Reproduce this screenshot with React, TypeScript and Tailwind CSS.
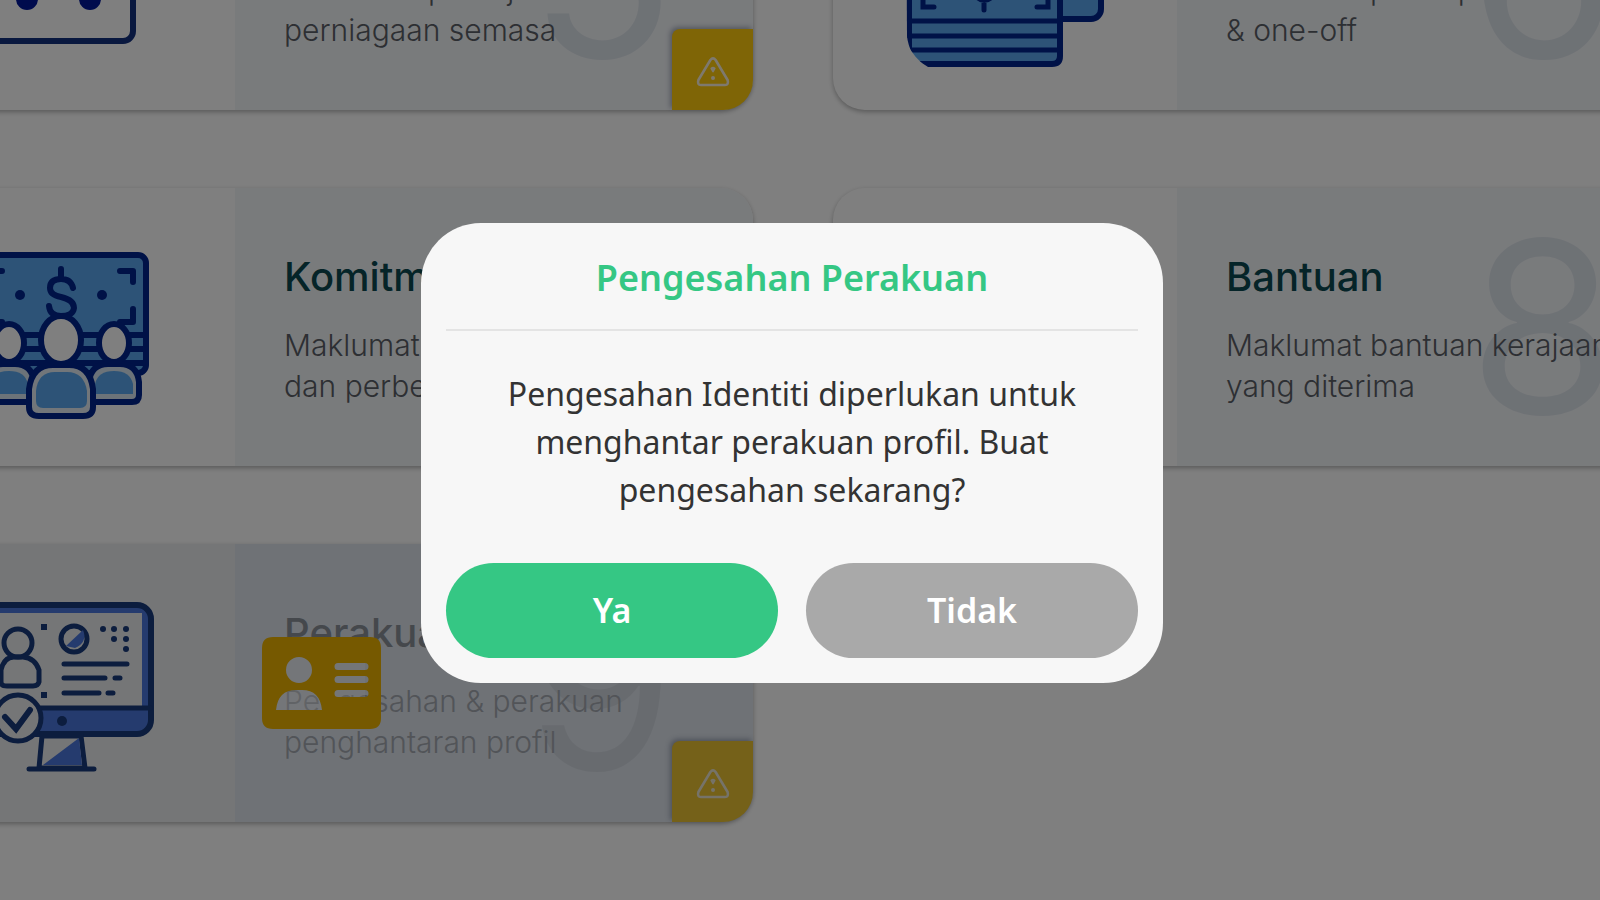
import React, { useState } from 'react';

interface ProfileCardProps {
  title: string;
  text: string;
  number: string;
  icon?: React.ReactNode;
  warning?: boolean;
  disabled?: boolean;
}

function WarningBadge({ faded }: { faded?: boolean }) {
  return (
    <span
      className={`absolute right-0 bottom-0 flex h-[81px] w-[81px] items-center justify-center rounded-tl-lg rounded-br-[30px] pt-1 shadow-[-2px_-2px_5px_rgba(80,90,120,0.45)] ${
        faded ? 'bg-[#eac232]' : 'bg-[#fecb0c]'
      }`}
    >
      <svg viewBox="0 0 34 30" className="h-[30px] w-[34px]" fill="none" stroke={faded ? '#ece6d2' : '#fdf3dc'} strokeWidth="2.6" strokeLinejoin="round">
        <path d="M14.4 3Q17 -.2 19.6 3L31.6 23Q33 28 29 28H5Q1 28 2.4 23Z" />
        <path d="M15.4 11.4Q17 10 18.6 11.4L17 14.4Z" strokeWidth="2" />
        <circle cx="17" cy="21" r="1" strokeWidth="2" />
      </svg>
    </span>
  );
}

function ProfileCard({ title, text, number, icon, warning, disabled }: ProfileCardProps) {
  return (
    <article
      className={`relative flex rounded-[32px] shadow-[0_2px_5px_rgba(0,0,0,0.3)] ${disabled ? 'bg-[#ebedee]' : 'bg-white'}`}
    >
      <div className="flex w-[344px] shrink-0 items-center justify-center">{icon}</div>
      <div
        className={`relative flex-1 rounded-r-[32px] pt-[63px] pb-[59px] pl-[49px] ${disabled ? 'bg-[#dee4ec]' : 'bg-[#f3f6f9]'}`}
      >
        <span
          className={`absolute inset-y-0 right-[78px] flex items-center text-[240px] leading-none ${
            disabled ? 'text-[#d1d7df]' : 'text-[#dde4eb]'
          }`}
        >
          {number}
        </span>
        <h2 className={`relative text-[40px] leading-[52px] font-medium ${disabled ? 'text-[#8a9199]' : 'text-[#0a4850]'}`}>
          {title}
        </h2>
        <p
          className={`relative mt-[22px] text-[30px] leading-[41px] font-light whitespace-pre-line ${
            disabled ? 'text-[#a4a9b1]' : 'text-[#5a5e66]'
          }`}
        >
          {text}
        </p>
      </div>
      {warning && <WarningBadge faded={disabled} />}
    </article>
  );
}

function BusinessIcon() {
  return (
    <svg viewBox="0 0 202 168" className="h-[168px] w-[202px] overflow-visible" fill="none" stroke="#12307f" strokeWidth="6">
      <rect x="3" y="10" width="168" height="144" rx="10" />
      <circle cx="65" cy="112" r="11" fill="#00179b" stroke="none" />
      <circle cx="128" cy="112" r="11" fill="#00179b" stroke="none" />
    </svg>
  );
}

function MoneyIcon() {
  return (
    <svg viewBox="0 0 198 192" className="h-[192px] w-[198px]" fill="none" stroke="#00248f" strokeWidth="6" strokeLinecap="round">
      <defs>
        <clipPath id="money-corner">
          <path d="M0 0H198V192H22Q2 180 1 160Z" />
        </clipPath>
      </defs>
      <rect x="60" y="40" width="135" height="104" rx="10" fill="#5aa7ee" />
      <g clipPath="url(#money-corner)">
        <path d="M3 70H154V181Q154 189 146 189H3Z" fill="#5aa7ee" />
        <path d="M3 146H154M3 161H154M3 175H154" strokeWidth="5" />
      </g>
      <path d="M17 120V132H28M142 120V132H131M78 126V135M71 122Q78 129 86 122" strokeWidth="5" />
    </svg>
  );
}

function CommitmentIcon() {
  return (
    <svg viewBox="0 0 180 168" className="mt-4 h-[168px] w-[180px]" stroke="#00248f" strokeWidth="6" strokeLinecap="round" strokeLinejoin="round">
      <rect x="3" y="4" width="170" height="118" rx="8" fill="#5aa7ee" />
      <path d="M6 84H170M6 98H170M6 112H170" />
      <g fill="none">
        <path d="M147 20H160V31M147 71H160V58M29 20H16V31M29 71H16V58" />
        <path d="M88 18V26M100 37Q98 28 88 28Q77 28 77 37Q77 44 88 46Q101 49 101 57Q100 65 88 65Q77 65 76 55" />
      </g>
      <circle cx="47" cy="44" r="5" fill="#00248f" stroke="none" />
      <circle cx="129" cy="44" r="5" fill="#00248f" stroke="none" />
      {[36, 141].map((x) => (
        <g key={x} transform={`translate(${x} 0)`}>
          <path d="M-25 144V131Q-23 113 -6 113H6Q23 113 25 131V144Q25 151 18 151H-18Q-25 151 -25 144Z" fill="#d9e6f2" />
          <path d="M-19 143V133Q-16 120 0 120Q16 120 19 133V143Z" fill="#5aa7ee" stroke="none" />
          <ellipse cx="0" cy="92" rx="15" ry="19" fill="#fff" />
        </g>
      ))}
      <path d="M56 156V138Q59 114 80 114H96Q117 114 120 138V156Q120 165 110 165H66Q56 165 56 156Z" fill="#e4edf4" />
      <path d="M63 150V140Q65 121 82 121H94Q111 121 114 140V150Q114 157 107 157H70Q63 157 63 150Z" fill="#5aa7ee" stroke="none" />
      <ellipse cx="88" cy="89" rx="20" ry="24" fill="#fff" />
    </svg>
  );
}

function DeclarationIcon() {
  return (
    <svg viewBox="0 0 182 170" className="mt-2 h-[170px] w-[182px]" fill="none" stroke="#183a7c" strokeWidth="6" strokeLinecap="round">
      <rect x="3" y="3" width="176" height="129" rx="14" fill="#4b77dc" />
      <path d="M8 11H170V104H8Z" fill="#ebedee" stroke="none" />
      <path d="M6 106H178" strokeWidth="5" />
      <path d="M70 134L67 166H113L109 134Z" fill="#ebedee" strokeWidth="5" />
      <path d="M71 163L107 136L110 163Z" fill="#4b77dc" stroke="none" />
      <path d="M57 167H122" strokeWidth="5" />
      <circle cx="90" cy="119" r="5" fill="#183a7c" stroke="none" />
      <g strokeWidth="5">
        <circle cx="46" cy="41" r="14" />
        <path d="M29 80V68Q32 55 42 55H51Q63 56 67 68V80Q66 84 61 84H35Q29 84 29 80Z" />
        <circle cx="102" cy="37" r="13" />
        <path d="M94 44L111 28Q116 40 103 46Z" fill="#4b77dc" stroke="none" />
        <path d="M92 62H155M92 76H133M143 76H148M92 91H127M136 91H141" />
      </g>
      <path d="M69 22h6v6h-6ZM69 90h6v6h-6Z" fill="#183a7c" stroke="none" />
      <g fill="#183a7c" stroke="none">
        {[[131, 27], [142, 27], [154, 27], [142, 37], [154, 37], [154, 47]].map(([x, y]) => (
          <circle key={`${x}-${y}`} cx={x} cy={y} r="3" />
        ))}
      </g>
      <circle cx="46" cy="116" r="23" fill="#ebedee" strokeWidth="5" />
      <path d="M33 115L44 127L58 108" />
    </svg>
  );
}

function IdCardIcon() {
  return (
    <svg viewBox="0 0 119 92" className="absolute top-[93px] left-[371px] h-[92px] w-[119px]">
      <path fill="#fff" fillOpacity="0.35" d="M14 20H103V73H14Z" />
      <path
        fill="#ecb200"
        fillRule="evenodd"
        d="M11 0H108Q119 0 119 11V81Q119 92 108 92H11Q0 92 0 81V11Q0 0 11 0ZM37 20a13 13 0 1 0 0 26a13 13 0 1 0 0-26ZM14 73H60Q58 53 40 53H34Q16 53 14 73ZM76 26a3.5 3.5 0 0 0 0 7H103a3.5 3.5 0 0 0 0-7ZM76 39a3.5 3.5 0 0 0 0 7H103a3.5 3.5 0 0 0 0-7ZM76 53a3.5 3.5 0 0 0 0 7H103a3.5 3.5 0 0 0 0-7Z"
      />
    </svg>
  );
}

export default function App() {
  const [open, setOpen] = useState(true);

  return (
    <div className="relative min-h-screen overflow-hidden bg-white font-['Inter',sans-serif]">
      {/* Profile sections */}
      <main className="-mt-[168px] -mr-[95px] -ml-[109px] grid grid-cols-2 gap-x-20 gap-y-[78px]">
        <ProfileCard title="Pekerjaan" text={'Maklumat pekerjaan\nperniagaan semasa'} number="5" icon={<BusinessIcon />} warning />
        <ProfileCard title="Pendapatan" text={'Maklumat pendapatan bulanan\n& one-off'} number="6" icon={<MoneyIcon />} />
        <ProfileCard title="Komitmen" text={'Maklumat komitmen\ndan perbelanjaan'} number="7" icon={<CommitmentIcon />} />
        <ProfileCard title="Bantuan" text={'Maklumat bantuan kerajaan\nyang diterima'} number="8" />
        <div className="relative">
          <ProfileCard title="Perakuan" text={'Pengesahan & perakuan\npenghantaran profil'} number="9" icon={<DeclarationIcon />} warning disabled />
          <IdCardIcon />
        </div>
      </main>

      {/* Confirmation dialog */}
      {open && (
        <div className="fixed inset-0 flex items-center justify-center bg-black/50 pt-[6px] pr-4 font-['Noto_Sans',sans-serif]">
          <div
            role="dialog"
            aria-modal="true"
            aria-labelledby="dialog-title"
            className="w-[742px] rounded-[60px] bg-[#f7f7f7] p-[25px] text-center"
          >
            <h1 id="dialog-title" className="border-b-2 border-[#e4e4e4] pt-1 pb-[25px] text-[36px] leading-[52px] font-semibold text-[#35c784]">
              Pengesahan Perakuan
            </h1>
            <p className="px-12 pt-[39px] text-[32px] leading-[48px] text-[#333333]">
              Pengesahan Identiti diperlukan untuk menghantar perakuan profil. Buat pengesahan sekarang?
            </p>
            <div className="mt-[49px] grid grid-cols-2 gap-7 text-[34px] font-semibold text-white">
              <button type="button" onClick={() => setOpen(false)} className="h-[95px] rounded-full bg-[#35c784]">
                Ya
              </button>
              <button type="button" onClick={() => setOpen(false)} className="h-[95px] rounded-full bg-[#a9a9a9]">
                Tidak
              </button>
            </div>
          </div>
        </div>
      )}
    </div>
  );
}
